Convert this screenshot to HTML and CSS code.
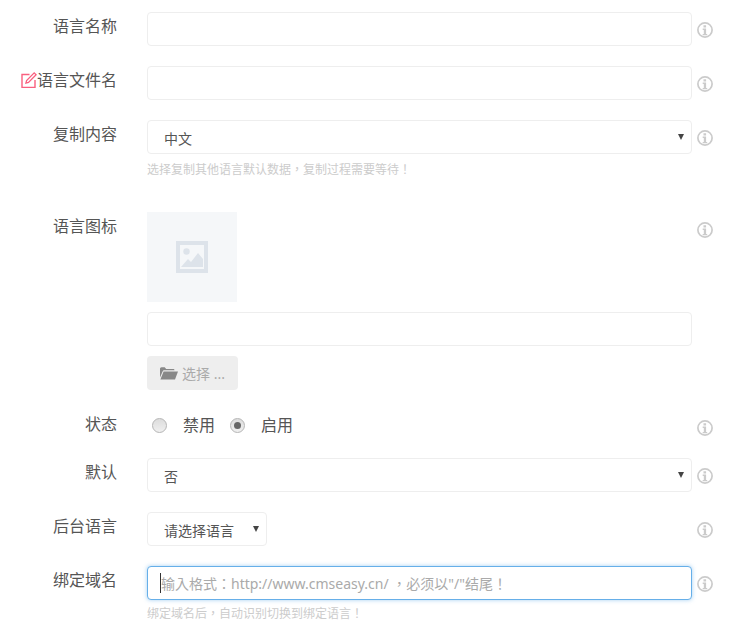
FILE: index.html
```html
<!DOCTYPE html>
<html lang="zh-CN">
<head>
<meta charset="utf-8">
<title>语言设置</title>
<link rel="stylesheet" href="styles.css">
</head>
<body>
<svg class="defs" width="0" height="0" aria-hidden="true">
  <symbol id="info" viewBox="0 0 16 16">
    <circle cx="8" cy="8" r="7.100" fill="none" stroke="#cbcbcb" stroke-width="1.700"/>
    <path d="M6.500 3.200h2.600v2.400H6.500zM5.700 6.600h3.400v5.300h1.100v1.300H5.700v-1.300h1.100V7.900H5.700z" fill="#cbcbcb"/>
  </symbol>
</svg>
<form class="form">
  <div class="row">
    <label class="label">语言名称</label>
    <div class="control"><input class="input" type="text"></div>
    <svg class="info"><use href="#info"/></svg>
  </div>
  <div class="row">
    <label class="label"><svg class="edit" viewBox="0 0 16 16"><path d="M8.500 2.500H1v13h13V8" fill="none" stroke="#f9607f" stroke-width="1.400"/><path d="M13.200.9l1.900 1.900-7.600 7.600-2.600.7.700-2.600z" fill="none" stroke="#f9607f" stroke-width="1.300"/></svg>语言文件名</label>
    <div class="control"><input class="input" type="text"></div>
    <svg class="info"><use href="#info"/></svg>
  </div>
  <div class="row row-help">
    <label class="label">复制内容</label>
    <div class="control">
      <div class="select-wrap"><select class="select"><option>中文</option></select></div>
      <p class="help">选择复制其他语言默认数据<span class="punc" lang="zh-TW">，</span>复制过程需要等待<span class="punc" lang="zh-TW">！</span></p>
    </div>
    <svg class="info"><use href="#info"/></svg>
  </div>
  <div class="row">
    <label class="label">语言图标</label>
    <div class="control">
      <div class="thumb">
        <svg class="thumb-icon" viewBox="0 0 32 32"><path fill-rule="evenodd" d="M0 0h32v32H0zM4 4v24h24V4z" fill="#dde3ea"/><circle cx="10.500" cy="10.500" r="3.200" fill="#dde3ea"/><path d="M5 26l7-8 3 3 7-9 5 6v8z" fill="#dde3ea"/></svg>
      </div>
      <input class="input input-gap" type="text">
      <button class="btn" type="button"><svg class="folder" viewBox="0 0 18 14"><path d="M0 3c0-1 .6-1.700 1.500-1.700h3.200L6.200 3h7c.8 0 1.300.4 1.300 1.200H4.300C3.400 4.200 3 4.600 2.700 5.300L0 11.500z" fill="#888"/><path d="M3.600 5.400h14.400L15 13.400H.4z" fill="#888"/></svg>选择 ...</button>
    </div>
    <svg class="info"><use href="#info"/></svg>
  </div>
  <div class="row row-radio">
    <label class="label">状态</label>
    <div class="control radios">
      <span class="radio"></span><span class="radio-text">禁用</span>
      <span class="radio radio-on"></span><span class="radio-text">启用</span>
    </div>
    <svg class="info"><use href="#info"/></svg>
  </div>
  <div class="row">
    <label class="label">默认</label>
    <div class="control"><div class="select-wrap"><select class="select"><option>否</option></select></div></div>
    <svg class="info"><use href="#info"/></svg>
  </div>
  <div class="row">
    <label class="label">后台语言</label>
    <div class="control"><div class="select-wrap select-small"><select class="select"><option>请选择语言</option></select></div></div>
    <svg class="info"><use href="#info"/></svg>
  </div>
  <div class="row">
    <label class="label">绑定域名</label>
    <div class="control">
      <div class="focus-wrap"><input class="input input-focus" lang="zh-TW" type="text" placeholder="输入格式：http://www.cmseasy.cn/ ，必须以&quot;/&quot;结尾！"></div>
      <p class="help help-last">绑定域名后<span class="punc" lang="zh-TW">，</span>自动识别切换到绑定语言<span class="punc" lang="zh-TW">！</span></p>
    </div>
    <svg class="info"><use href="#info"/></svg>
  </div>
</form>
</body>
</html>
```
FILE: styles.css
```css
* { box-sizing: border-box; }
html, body { margin: 0; padding: 0; background: #fff; }
body {
  font-family: "Noto Sans", "Noto Sans CJK SC", sans-serif;
  color: #555;
  width: 733px;
  height: 636px;
  overflow: hidden;
}
.defs { position: absolute; }
.form { padding-top: 12px; }
.row {
  display: flex;
  align-items: flex-start;
  margin-bottom: 20px;
}
.label {
  width: 117px;
  flex: none;
  text-align: right;
  font-size: 16px;
  line-height: 28px;
  color: #555;
  white-space: nowrap;
}
.edit { width: 16px; height: 16px; vertical-align: -2px; }
.control { width: 545px; flex: none; margin-left: 30px; }
.info { width: 16px; height: 16px; flex: none; margin: 10px 0 0 5px; }
.punc { font-family: "Noto Sans CJK TC", sans-serif; }
.input {
  display: block;
  width: 100%;
  height: 34px;
  border: 1px solid #eee;
  border-radius: 4px;
  background: #fff;
  padding: 0 13px;
  font: inherit;
  font-size: 14px;
  color: #555;
  outline: none;
}
.input::placeholder { color: #aaa; opacity: 1; }
.input-gap { margin-top: 10px; }
.select-wrap { position: relative; height: 34px; }
.select-wrap::after {
  content: "";
  position: absolute;
  right: 8px;
  top: 14px;
  border-left: 3px solid transparent;
  border-right: 3px solid transparent;
  border-top: 6px solid #444;
}
.select-small { width: 120px; }
.select {
  appearance: none;
  display: block;
  width: 100%;
  height: 34px;
  border: 1px solid #eee;
  border-radius: 4px;
  background: #fff;
  padding: 2px 16px 0;
  font: inherit;
  font-size: 14px;
  color: #555;
  outline: none;
}
.help {
  margin: 7px 0 0;
  font-size: 12px;
  line-height: 16px;
  color: #ccc;
}
.row-help { margin-bottom: 34px; }
.thumb {
  width: 90px;
  height: 90px;
  background: #f5f7f9;
  display: flex;
  align-items: center;
  justify-content: center;
}
.thumb-icon { width: 32px; height: 32px; }
.btn {
  display: flex;
  align-items: center;
  width: 91px;
  height: 34px;
  margin-top: 10px;
  padding: 0 0 0 13px;
  border: 0;
  border-radius: 4px;
  background: #eee;
  color: #aaa;
  font: inherit;
  font-size: 14px;
}
.folder { width: 18px; height: 14px; margin-right: 4px; }
.row-radio { margin-bottom: 18px; }
.radios {
  display: flex;
  align-items: center;
  height: 30px;
  font-size: 16px;
  color: #555;
}
.radio {
  width: 15px;
  height: 15px;
  border-radius: 50%;
  border: 1px solid #b5b5b5;
  background: linear-gradient(#dcdcdc, #f0f0f0);
  margin-left: 5px;
  position: relative;
}
.radio-on { margin-left: 15px; }
.radio-on::after {
  content: "";
  position: absolute;
  left: 3px;
  top: 3px;
  width: 7px;
  height: 7px;
  border-radius: 50%;
  background: #666;
}
.radio-text { margin-left: 16px; padding-bottom: 3px; }
.focus-wrap { position: relative; }
.focus-wrap::after {
  content: "";
  position: absolute;
  left: 13px;
  top: 7px;
  width: 1px;
  height: 20px;
  background: #333;
}
.input-focus {
  border-color: #66afe9;
  box-shadow: 0 0 4px rgba(102, 175, 233, .6);
  font-family: "Noto Sans", "Noto Sans CJK TC", sans-serif;
}
.help-last { margin-top: 5px; }
```
